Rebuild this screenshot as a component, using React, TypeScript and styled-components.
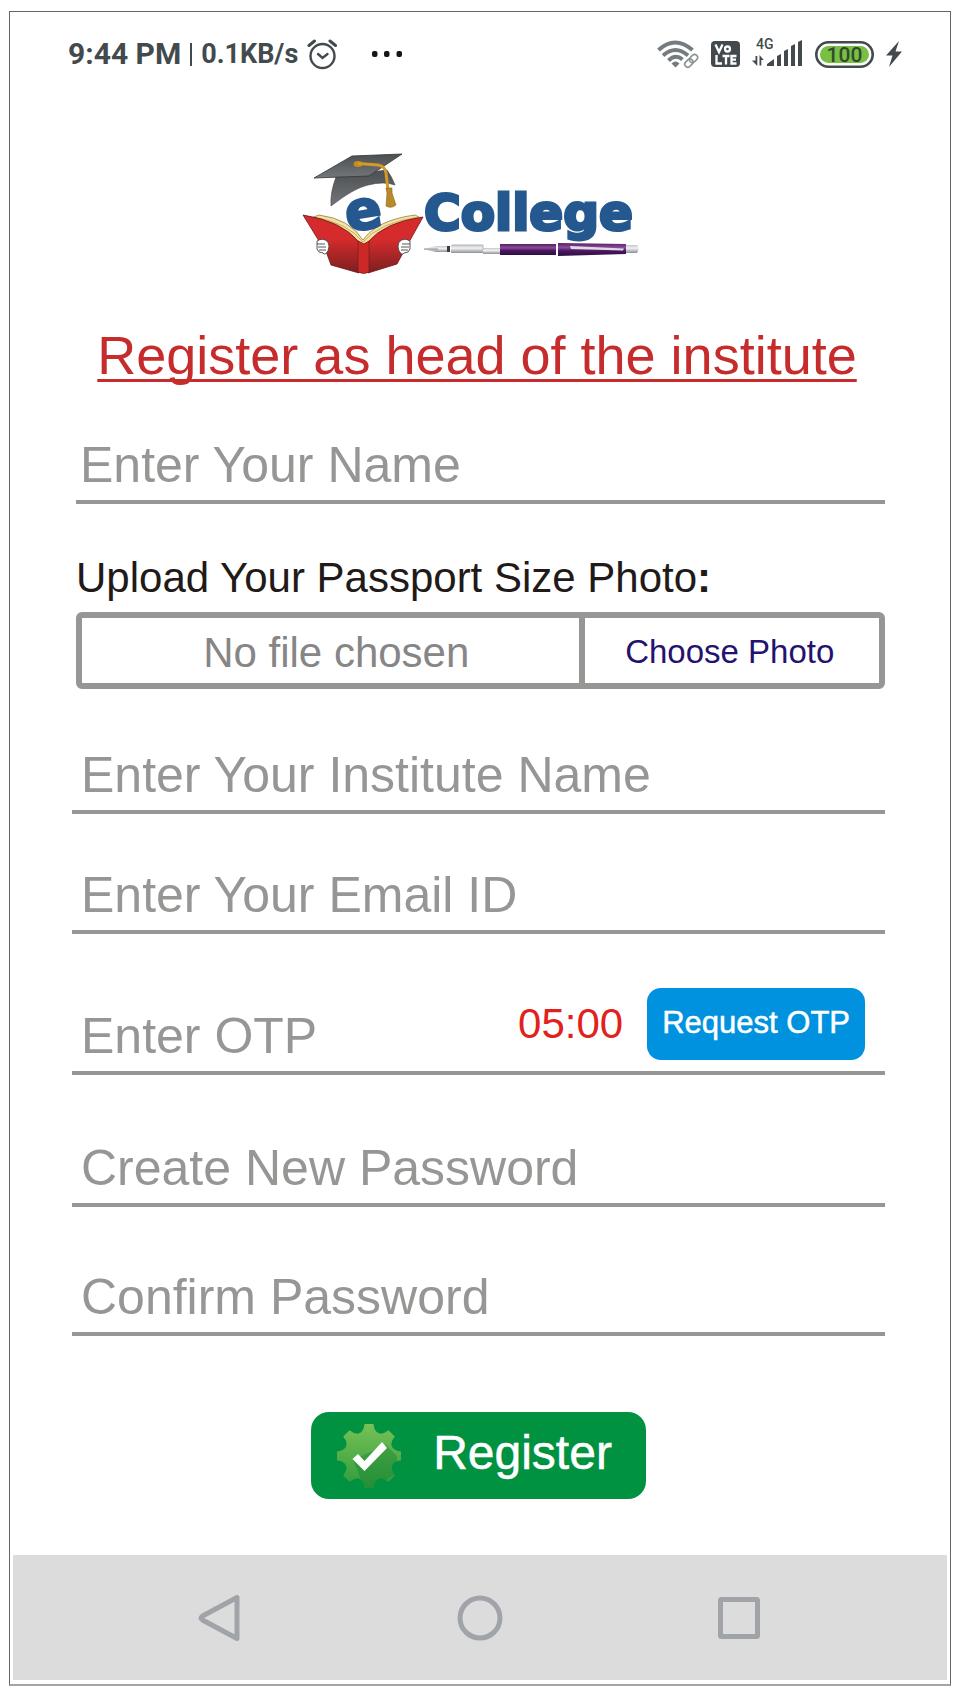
import React from 'react';
import styled, { createGlobalStyle, css } from 'styled-components';

const INK = '#434a4d';
const LINE = '#969694';

const GlobalStyle = createGlobalStyle`
  *, *::before, *::after { box-sizing: border-box; }
  body { margin: 0; background: #fff; font-family: "Liberation Sans", Arial, sans-serif; }
  button, input { font-family: inherit; }
`;

const Screen = styled.div`
  display: flex;
  flex-direction: column;
  margin: 11px 11px 11px 9px;
  padding: 0 3px 4px;
  border: 1px solid #666;
  border-bottom: 2px solid #a6a6a6;
`;

const StatusBar = styled.header`
  display: flex;
  align-items: center;
  justify-content: space-between;
  height: 84px;
  padding: 0 45px 0 55px;
  color: ${INK};
  font-family: Roboto, sans-serif;
  font-weight: 700;
`;

const StatusGroup = styled.div<{ $gap: number }>`
  display: flex;
  align-items: center;
  gap: ${p => p.$gap}px;
`;

const Clock = styled.span`
  font-size: 30px;
  line-height: 34px;
`;

const Rate = styled.span`
  font-size: 27px;
  line-height: 34px;
`;

const Pipe = styled.span`
  width: 2px;
  height: 23px;
  background: ${INK};
`;

const MoreDots = styled.span`
  display: flex;
  padding-left: 24px;
`;

const Brand = styled.div`
  display: flex;
  justify-content: center;
  padding: 57px 14px 0 0;
`;

const Title = styled.h1`
  margin: 46px 0 0;
  padding-right: 6px;
  color: #c52c2b;
  font-size: 54px;
  font-weight: 400;
  line-height: 62px;
  text-align: center;
  text-decoration: underline;
  text-decoration-thickness: 3px;
  text-decoration-skip-ink: none;
  text-underline-offset: 5px;
`;

const Form = styled.form`
  display: flex;
  flex-direction: column;
  padding: 36px 62px 56px 59px;
`;

const Identity = styled.section`
  padding-left: 4px;
`;

const Field = styled.div<{ $height: number; $inset: number }>`
  display: flex;
  align-items: flex-end;
  height: ${p => p.$height}px;
  padding: 0 20px 6px ${p => p.$inset}px;
  border-bottom: 4px solid ${LINE};
`;

const TextInput = styled.input`
  flex: 1;
  min-width: 0;
  height: 58px;
  padding: 0;
  border: 0;
  outline: 0;
  background: transparent;
  color: #333;
  font-size: 50px;
  line-height: 58px;
  &::placeholder { color: ${LINE}; opacity: 1; }
`;

const UploadLabel = styled.label`
  display: block;
  margin-top: 50px;
  color: #211a18;
  font-size: 42px;
  line-height: 48px;
`;

const FilePicker = styled.div`
  display: flex;
  height: 77px;
  margin-top: 10px;
  border: 6px solid ${LINE};
  border-radius: 6px;
`;

const FileName = styled.output`
  flex: 487;
  padding-left: 12px;
  color: #868686;
  font-size: 42px;
  line-height: 70px;
  text-align: center;
`;

const ChooseButton = styled.button`
  flex: 292;
  padding: 2px 4px 0 0;
  border: 0;
  border-left: 6px solid ${LINE};
  background: transparent;
  color: #24126f;
  font-size: 33px;
`;

const HiddenFile = styled.input`
  display: none;
`;

const OtpTools = styled.div`
  display: flex;
  align-items: center;
  gap: 24px;
  padding-bottom: 5px;
`;

const Timer = styled.time`
  color: #e2211c;
  font-size: 42px;
  line-height: 48px;
`;

const solid = css`
  border: 0;
  color: #fff;
  white-space: nowrap;
`;

const OtpButton = styled.button`
  ${solid}
  height: 72px;
  padding: 0 15px 2px;
  border-radius: 14px;
  background: #0092df;
  font-size: 31px;
  -webkit-text-stroke: 0.5px #fff;
`;

const RegisterButton = styled.button`
  ${solid}
  display: flex;
  align-items: center;
  align-self: center;
  gap: 32px;
  height: 87px;
  margin-top: 76px;
  padding: 0 34px 0 26px;
  border-radius: 18px;
  background: #009240;
  font-size: 48px;
  line-height: 56px;
  -webkit-text-stroke: 0.5px #fff;
`;

const RegisterText = styled.span`
  padding-bottom: 6px;
`;

const NavBar = styled.nav`
  display: flex;
  align-items: center;
  justify-content: space-between;
  height: 125px;
  padding: 0 187px 0 184px;
  background: #dcdcdc;
`;

const NavButton = styled.button`
  display: flex;
  padding: 0;
  border: 0;
  background: transparent;
`;

const AlarmIcon = () => (
  <svg width="31" height="31" viewBox="0 0 31 31" fill="none" stroke={INK} strokeWidth="2.4" strokeLinecap="round">
    <circle cx="15.500" cy="17" r="12" />
    <path d="M11 15l4.500 4 5-4" />
    <path d="M2 6.500L7.500 2M23 2l5.500 4.500" strokeWidth="3" />
  </svg>
);

const DotsIcon = () => (
  <svg width="32" height="8" viewBox="0 0 32 8" fill="#161616">
    <rect x="1" y="1" width="5.500" height="6" rx="2" />
    <rect x="13" y="1" width="5.500" height="6" rx="2" />
    <rect x="25.500" y="1" width="5.500" height="6" rx="2" />
  </svg>
);

const WifiIcon = () => (
  <svg width="42" height="28" viewBox="0 0 42 28" fill="none" stroke="#757b7e" strokeWidth="4">
    <path d="M1.500 10Q18 -5 35.500 10M6 15.500Q18.500 4.500 31 15.500M11.500 20.500Q18.500 13.500 25.500 19.500" />
    <path d="M18.500 27.500l-4-4q4-4 8 0z" fill="#757b7e" stroke="none" />
    <g strokeWidth="1.600" stroke="#8b9092" transform="rotate(-45 34 21)">
      <rect x="26.500" y="18" width="9" height="6" rx="3" fill="#fff" />
      <rect x="33" y="18" width="9" height="6" rx="3" />
    </g>
  </svg>
);

const VolteIcon = () => (
  <svg width="29" height="26" viewBox="0 0 29 26">
    <rect width="29" height="26" rx="4" fill={INK} />
    <g fill="none" stroke="#fff" strokeWidth="2.300">
      <path d="M4.500 3.500l3.500 7.500 3.500-7.500M5.500 14v8.500h5.500M11.500 15h7M15 15v8.500M25.500 15h-5v7.500h5M20.500 18.700h4.500" />
      <circle cx="16.500" cy="8" r="2.500" />
    </g>
  </svg>
);

const SignalIcon = () => (
  <svg width="51" height="28" viewBox="0 0 51 28" fill={INK} overflow="visible">
    <text x="4" y="9" fontFamily="Roboto, sans-serif" fontSize="14" fontWeight="500">4G</text>
    <path d="M15 26v-2l7-5v7zM25 16l4-2v12h-4zM32 11l4-2v17h-4zM39 6l4-2v22h-4zM46 2l4-2v26h-4z" />
    <path d="M3.500 16h1.800v10L0 20.500h3.500zM7.500 25.500h1.800V20h2.500L7.500 15z" />
  </svg>
);

const BatteryIcon = () => (
  <svg width="59" height="27" viewBox="0 0 59 27">
    <rect x="1.300" y="1.300" width="56.400" height="24.400" rx="12.200" fill="#fff" stroke={INK} strokeWidth="2.600" />
    <rect x="5" y="5" width="49" height="17" rx="8.500" fill="#77c043" />
    <text x="29.500" y="21" textAnchor="middle" fontFamily="Roboto, sans-serif" fontSize="21" fontWeight="500" fill="#2f4a2c">100</text>
  </svg>
);

const BoltIcon = () => (
  <svg width="16" height="26" viewBox="0 0 16 26" fill={INK}>
    <path d="M13 0L0 14.500h6.500L3 26 16 10.500H9.500z" />
  </svg>
);

const Logo = () => (
  <svg width="342" height="125" viewBox="0 0 342 125" role="img" aria-label="e College">
    <defs>
      <linearGradient id="cap" x1="0" y1="0" x2="0" y2="1">
        <stop offset="0" stopColor="#4c4f52" />
        <stop offset="1" stopColor="#73777a" />
      </linearGradient>
      <linearGradient id="cover" x1="0" y1="0" x2="0" y2="1">
        <stop offset="0.400" stopColor="#d62b2c" />
        <stop offset="1" stopColor="#7b1f20" />
      </linearGradient>
      <linearGradient id="barrel" x1="0" y1="0" x2="0" y2="1">
        <stop offset="0" stopColor="#552062" />
        <stop offset="0.350" stopColor="#8b4a9b" />
        <stop offset="0.600" stopColor="#4b1760" />
        <stop offset="1" stopColor="#2d0e40" />
      </linearGradient>
      <linearGradient id="steel" x1="0" y1="0" x2="0" y2="1">
        <stop offset="0" stopColor="#c4c6ca" />
        <stop offset="0.400" stopColor="#f1f2f4" />
        <stop offset="1" stopColor="#8d8f94" />
      </linearGradient>
    </defs>
    <path d="M34 24Q28 40 29 53Q52 35 66 32Q82 28 93 32Q90 24 85 17L60 20z" fill="url(#cap)" stroke="#3a3c3f" strokeWidth="0.600" />
    <path d="M12 25L50 3L100 1L67 23z" fill="url(#cap)" stroke="#333" strokeWidth="0.800" />
    <ellipse cx="56" cy="11" rx="4.500" ry="3" fill="#c88c18" />
    <path d="M56 10.500L76 12Q83 13 84 20L86 37" fill="none" stroke="#d49b22" strokeWidth="3" />
    <path d="M84 35h6v5l4 12q-5 4-10 1l1-13z" fill="#b88a28" stroke="#8a651b" strokeWidth="0.600" />
    <path d="M9 65L17 62Q48 66 61 87Q75 67 113 62L119 65L62 91z" fill="#f2e2a3" stroke="#8c6a2a" strokeWidth="0.700" />
    <path d="M12 64Q46 70 61 89Q77 70 116 64" fill="none" stroke="#a9863e" strokeWidth="0.600" />
    <g fill="#24588f" stroke="#24588f" fontFamily='"DejaVu Sans", sans-serif' fontWeight="700">
      <text x="43" y="76" fontSize="54" strokeWidth="2.500" transform="rotate(-9 62 60)">e</text>
      <text x="122" y="77" fontSize="50" strokeWidth="3">College</text>
    </g>
    <path d="M1 62Q40 68 57 89V120L29 112L25 101z" fill="url(#cover)" stroke="#6b1516" strokeWidth="0.800" />
    <path d="M121 64Q83 69 66 89V120L95 111L102 98z" fill="url(#cover)" stroke="#6b1516" strokeWidth="0.800" />
    <path d="M56 88l6 3 5-3V119q-5 3-11 0z" fill="#cb2828" stroke="#7b1718" strokeWidth="0.700" />
    <g fill="#fff" stroke="#444" strokeWidth="0.900">
      <path d="M15 88q6-4 11 1q2 4 0 9q-3 5-5 2q-5 0-6-4z" />
      <path d="M15 91h8M16 94h8M17 97h7" />
      <path d="M108 88q-6-4-11 1q-2 4 0 9q3 5 5 2q5 0 6-4z" />
      <path d="M108 91h-8M107 94h-8M106 97h-7" />
    </g>
    <path d="M121 96l13-3h11v6h-11z" fill="url(#steel)" />
    <path d="M122 96h14" stroke="#666" strokeWidth="0.700" />
    <rect x="145" y="93" width="3" height="6" fill="#3b3b40" />
    <rect x="149" y="92" width="32" height="8" fill="url(#steel)" />
    <rect x="181" y="95" width="17" height="6" fill="url(#steel)" />
    <path d="M150 92h31v5" fill="none" stroke="#b5b7bb" />
    <rect x="198" y="91" width="56" height="11" fill="url(#barrel)" />
    <path d="M256 90l68 1v10l-68 2z" fill="url(#barrel)" />
    <path d="M268 93l54 2.500-1 2-52-1.500z" fill="#dfdce6" />
    <path d="M324 92h11q3 4 0 8h-11z" fill="url(#steel)" />
  </svg>
);

const TEETH = [0, 45, 90, 135, 180, 225, 270, 315];

const BadgeIcon = () => (
  <svg width="64" height="66" viewBox="0 0 64 66">
    <defs>
      <linearGradient id="gearFill" x1="0" y1="0" x2="0" y2="1">
        <stop offset="0" stopColor="#77c255" />
        <stop offset="1" stopColor="#2f9a3c" />
      </linearGradient>
      <clipPath id="gearShape">
        <circle cx="32" cy="33" r="25" />
        {TEETH.map(a => (
          <path key={a} d="M20 12Q27 9 27.500 1h9Q37 9 44 12z" transform={`rotate(${a} 32 33)`} />
        ))}
      </clipPath>
    </defs>
    <g clipPath="url(#gearShape)">
      <rect width="64" height="66" fill="url(#gearFill)" />
      <path d="M16 37L28 66h8L60 50V33L49 22z" fill="#157f31" opacity="0.400" />
    </g>
    <path d="M15.500 36l5.500-5 6.500 7L45 19l5 6-22.500 23z" fill="#fff" />
  </svg>
);

const BackIcon = () => (
  <svg width="44" height="48" viewBox="0 0 44 48" fill="none" stroke="#a0a4a8" strokeWidth="5" strokeLinejoin="round">
    <path d="M40 3.500v41L5.500 26q-3-2 0-4z" />
  </svg>
);

const HomeIcon = () => (
  <svg width="46" height="46" viewBox="0 0 46 46" fill="none" stroke="#a0a4a8" strokeWidth="5">
    <circle cx="23" cy="23" r="20" />
  </svg>
);

const RecentIcon = () => (
  <svg width="42" height="42" viewBox="0 0 42 42" fill="none" stroke="#a0a4a8" strokeWidth="5">
    <rect x="2.500" y="2.500" width="37" height="37" rx="1" />
  </svg>
);

type EntryProps = { label: string; type?: string; height: number; inset?: number; children?: React.ReactNode };

const Entry = ({ label, type = 'text', height, inset = 9, children }: EntryProps) => (
  <Field $height={height} $inset={inset}>
    <TextInput type={type} placeholder={label} aria-label={label} />
    {children}
  </Field>
);

export default function App() {
  const fileRef = React.useRef<HTMLInputElement>(null);
  const [fileName, setFileName] = React.useState('No file chosen');

  return (
    <>
      <GlobalStyle />
      <Screen>
        <StatusBar>
          <StatusGroup $gap={9}>
            <Clock>9:44 PM</Clock>
            <Pipe />
            <Rate>0.1KB/s</Rate>
            <AlarmIcon />
            <MoreDots>
              <DotsIcon />
            </MoreDots>
          </StatusGroup>
          <StatusGroup $gap={12}>
            <WifiIcon />
            <VolteIcon />
            <SignalIcon />
            <BatteryIcon />
            <BoltIcon />
          </StatusGroup>
        </StatusBar>
        <Brand>
          <Logo />
        </Brand>
        <Title>Register as head of the institute</Title>
        <Form onSubmit={e => e.preventDefault()}>
          <Identity>
            <Entry label="Enter Your Name" height={82} inset={4} />
            <UploadLabel htmlFor="photo">
              Upload Your Passport Size Photo<b>:</b>
            </UploadLabel>
            <FilePicker>
              <FileName htmlFor="photo">{fileName}</FileName>
              <ChooseButton type="button" onClick={() => fileRef.current?.click()}>Choose Photo</ChooseButton>
              <HiddenFile
                ref={fileRef}
                id="photo"
                type="file"
                accept="image/*"
                onChange={e => setFileName(e.target.files?.[0]?.name ?? 'No file chosen')}
              />
            </FilePicker>
          </Identity>
          <Entry label="Enter Your Institute Name" height={125} />
          <Entry label="Enter Your Email ID" type="email" height={120} />
          <Entry label="Enter OTP" height={141}>
            <OtpTools>
              <Timer>05:00</Timer>
              <OtpButton type="button">Request OTP</OtpButton>
            </OtpTools>
          </Entry>
          <Entry label="Create New Password" type="password" height={132} />
          <Entry label="Confirm Password" type="password" height={129} />
          <RegisterButton type="submit">
            <BadgeIcon />
            <RegisterText>Register</RegisterText>
          </RegisterButton>
        </Form>
        <NavBar>
          <NavButton type="button" aria-label="Back"><BackIcon /></NavButton>
          <NavButton type="button" aria-label="Home"><HomeIcon /></NavButton>
          <NavButton type="button" aria-label="Recent apps"><RecentIcon /></NavButton>
        </NavBar>
      </Screen>
    </>
  );
}
